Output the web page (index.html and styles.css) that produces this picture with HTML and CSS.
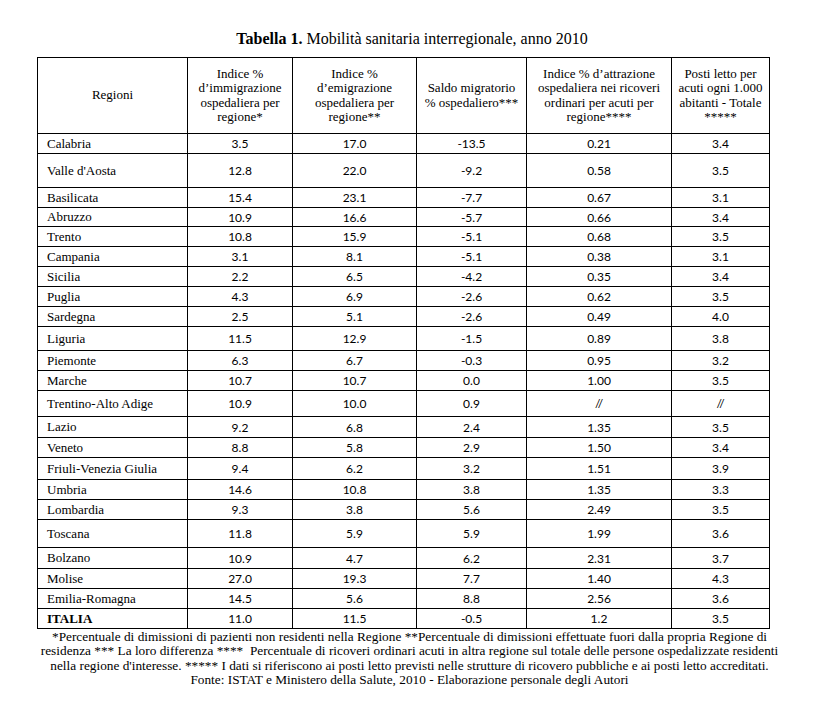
FILE: index.html
```html
<!DOCTYPE html>
<html lang="it">
<head>
<meta charset="utf-8">
<title>Tabella 1</title>
<link rel="stylesheet" href="styles.css">
</head>
<body>
<div class="page">
  <h1 class="title"><b>Tabella 1.</b> Mobilità sanitaria interregionale, anno 2010</h1>
  <table class="data">
    <colgroup>
      <col class="c1"><col class="c2"><col class="c3"><col class="c4"><col class="c5"><col class="c6">
    </colgroup>
    <thead>
      <tr class="head">
        <th>Regioni</th>
        <th>Indice %<br>d’immigrazione<br>ospedaliera per<br>regione*</th>
        <th>Indice %<br>d’emigrazione<br>ospedaliera per<br>regione**</th>
        <th>Saldo migratorio<br>% ospedaliero***</th>
        <th>Indice % d’attrazione<br>ospedaliera nei ricoveri<br>ordinari per acuti per<br>regione****</th>
        <th>Posti letto per<br>acuti ogni 1.000<br>abitanti - Totale<br>*****</th>
      </tr>
    </thead>
    <tbody>
      <tr><td>Calabria</td><td>3.5</td><td>17.0</td><td>-13.5</td><td>0.21</td><td>3.4</td></tr>
      <tr class="h34"><td>Valle d'Aosta</td><td>12.8</td><td>22.0</td><td>-9.2</td><td>0.58</td><td>3.5</td></tr>
      <tr><td>Basilicata</td><td>15.4</td><td>23.1</td><td>-7.7</td><td>0.67</td><td>3.1</td></tr>
      <tr class="h19"><td>Abruzzo</td><td>10.9</td><td>16.6</td><td>-5.7</td><td>0.66</td><td>3.4</td></tr>
      <tr><td>Trento</td><td>10.8</td><td>15.9</td><td>-5.1</td><td>0.68</td><td>3.5</td></tr>
      <tr><td>Campania</td><td>3.1</td><td>8.1</td><td>-5.1</td><td>0.38</td><td>3.1</td></tr>
      <tr><td>Sicilia</td><td>2.2</td><td>6.5</td><td>-4.2</td><td>0.35</td><td>3.4</td></tr>
      <tr><td>Puglia</td><td>4.3</td><td>6.9</td><td>-2.6</td><td>0.62</td><td>3.5</td></tr>
      <tr><td>Sardegna</td><td>2.5</td><td>5.1</td><td>-2.6</td><td>0.49</td><td>4.0</td></tr>
      <tr class="h24"><td>Liguria</td><td>11.5</td><td>12.9</td><td>-1.5</td><td>0.89</td><td>3.8</td></tr>
      <tr><td>Piemonte</td><td>6.3</td><td>6.7</td><td>-0.3</td><td>0.95</td><td>3.2</td></tr>
      <tr><td>Marche</td><td>10.7</td><td>10.7</td><td>0.0</td><td>1.00</td><td>3.5</td></tr>
      <tr class="h26"><td>Trentino-Alto Adige</td><td>10.9</td><td>10.0</td><td>0.9</td><td>//</td><td>//</td></tr>
      <tr class="h21"><td>Lazio</td><td>9.2</td><td>6.8</td><td>2.4</td><td>1.35</td><td>3.5</td></tr>
      <tr><td>Veneto</td><td>8.8</td><td>5.8</td><td>2.9</td><td>1.50</td><td>3.4</td></tr>
      <tr class="h22"><td>Friuli-Venezia Giulia</td><td>9.4</td><td>6.2</td><td>3.2</td><td>1.51</td><td>3.9</td></tr>
      <tr><td>Umbria</td><td>14.6</td><td>10.8</td><td>3.8</td><td>1.35</td><td>3.3</td></tr>
      <tr><td>Lombardia</td><td>9.3</td><td>3.8</td><td>5.6</td><td>2.49</td><td>3.5</td></tr>
      <tr class="h28"><td>Toscana</td><td>11.8</td><td>5.9</td><td>5.9</td><td>1.99</td><td>3.6</td></tr>
      <tr class="h21"><td>Bolzano</td><td>10.9</td><td>4.7</td><td>6.2</td><td>2.31</td><td>3.7</td></tr>
      <tr><td>Molise</td><td>27.0</td><td>19.3</td><td>7.7</td><td>1.40</td><td>4.3</td></tr>
      <tr><td>Emilia-Romagna</td><td>14.5</td><td>5.6</td><td>8.8</td><td>2.56</td><td>3.6</td></tr>
      <tr class="total"><td>ITALIA</td><td>11.0</td><td>11.5</td><td>-0.5</td><td>1.2</td><td>3.5</td></tr>
    </tbody>
  </table>
  <p class="notes">*Percentuale di dimissioni di pazienti non residenti nella Regione **Percentuale di dimissioni effettuate fuori dalla propria Regione di<br>residenza *** La loro differenza ****&nbsp; Percentuale di ricoveri ordinari acuti in altra regione sul totale delle persone ospedalizzate residenti<br>nella regione d'interesse. ***** I dati si riferiscono ai posti letto previsti nelle strutture di ricovero pubbliche e ai posti letto accreditati.<br>Fonte: ISTAT e Ministero della Salute, 2010 - Elaborazione personale degli Autori</p>
</div>
</body>
</html>
```

FILE: styles.css
```css
html, body {
  margin: 0;
  padding: 0;
  background: #ffffff;
}

.page {
  width: 819px;
  height: 704px;
  padding-top: 31px;
  box-sizing: border-box;
  font-family: "Liberation Serif", "Times New Roman", serif;
  color: #000;
}

.title {
  margin: 0 0 10px 0;
  padding-left: 5px;
  text-align: center;
  font-size: 16px;
  line-height: 16px;
  font-weight: normal;
}

.title b {
  font-weight: bold;
}

.data {
  margin-left: 37px;
  border-collapse: collapse;
  table-layout: fixed;
  width: 732px;
}

.c1 { width: 150px; }
.c2 { width: 105px; }
.c3 { width: 124px; }
.c4 { width: 110px; }
.c5 { width: 145px; }
.c6 { width: 98px; }

.data th,
.data td {
  border: 1px solid #000;
  padding: 0;
  vertical-align: middle;
}

.data th {
  height: 75px;
  font-weight: normal;
  font-size: 13px;
  line-height: 14.5px;
  text-align: center;
}

.data td {
  height: 19px;
  font-family: "Lato", "Liberation Sans", sans-serif;
  font-size: 12px;
  text-align: center;
}

.data td:first-child {
  font-family: "Liberation Serif", "Times New Roman", serif;
  font-size: 13px;
  text-align: left;
  padding-left: 9px;
}

.data tr.h19 td { height: 18px; }
.data tr.h21 td { height: 20px; }
.data tr.h22 td { height: 21px; }
.data tr.h24 td { height: 23px; }
.data tr.h26 td { height: 25px; }
.data tr.h28 td { height: 27px; }
.data tr.h34 td { height: 33px; }

.data tr.total td:first-child {
  font-weight: bold;
}

.notes {
  margin: 0;
  text-align: center;
  font-size: 13.3px;
  line-height: 14.4px;
  padding-top: 1px;
}
```
